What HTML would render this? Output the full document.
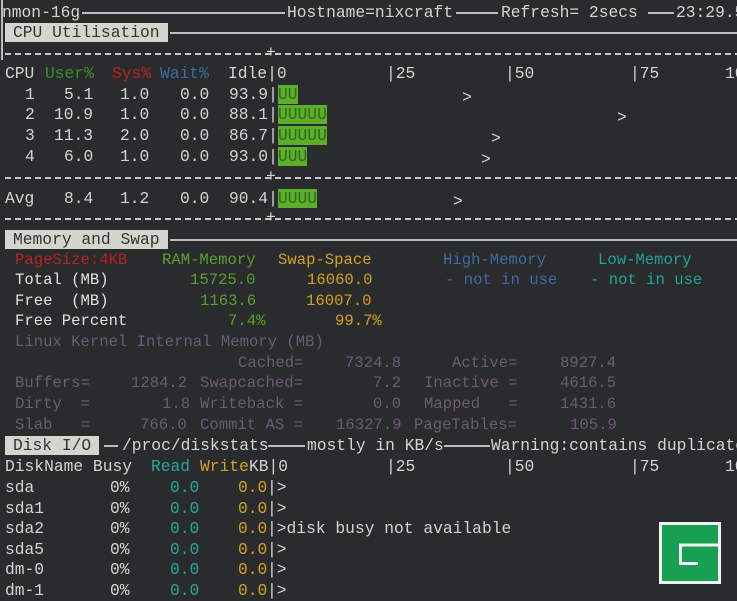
<!DOCTYPE html>
<html><head><meta charset="utf-8"><style>
html,body{margin:0;padding:0;}
body{width:737px;height:600px;background:#2a2b2c;overflow:hidden;position:relative;font-family:"Liberation Mono","DejaVu Sans Mono",monospace;font-size:16.3px;color:#d4d4d4;}
.r{position:absolute;left:0;width:737px;height:21px;}
.r span,.r div{position:absolute;top:0;line-height:21px;white-space:pre;}
.m span{font-size:15.6px;}
.hl{height:2px;background:#bdbdbd;top:10px!important;}
.ds{height:2px;top:10px!important;background:repeating-linear-gradient(90deg,#c8c8c8 0 6px,transparent 6px 10px);}
.box{background:#d5d5d0;color:#333;padding:0 8px;height:19px;top:1px!important;line-height:19px!important;}
.bar{background:#5cae2c;color:#2f6a16;height:19px;top:1px!important;line-height:19px!important;}
.g{color:#3f8f2a}.rd{color:#b92228}.b{color:#3c6ba6}.y{color:#d3a121}.t{color:#27a59a}.p{color:#6d5a78}.w{color:#e2e2e2}.gm{color:#5aa02c}.tl{color:#20a39a}
</style></head><body>
<div style="position:absolute;left:1px;top:0;width:2px;height:60px;background:#bbb"></div>
<!-- row0 -->
<div class="r" style="top:2px">
<span style="left:2px">nmon-16g</span><div class="hl" style="left:82px;width:203px"></div>
<span style="left:287px">Hostname=nixcraft</span><div class="hl" style="left:456px;width:42px"></div>
<span style="left:501px">Refresh= 2secs</span><div class="hl" style="left:648px;width:26px"></div>
<span style="left:676px">23:29.5</span>
</div>
<div class="r" style="top:22px"><span class="box" style="left:5px">CPU Utilisation</span><div class="hl" style="left:170px;width:567px"></div></div>
<div class="r" style="top:43px"><div class="ds" style="left:5px;width:732px"></div><span style="left:266px;top:-1px">+</span></div>
<div class="r" style="top:63px">
<span style="left:5px">CPU</span><span class="g" style="left:45px">User%</span><span class="rd" style="left:112px">Sys%</span><span class="b" style="left:160px">Wait%</span><span style="left:228px">Idle|0</span>
<span style="left:386px">|25</span><span style="left:505px">|50</span><span style="left:630px">|75</span><span style="left:725px">10</span>
</div>
<div class="r" style="top:84px"><span style="left:25px">1</span><span style="left:64px">5.1</span><span style="left:120px">1.0</span><span style="left:180px">0.0</span><span style="left:229px">93.9|</span><span class="bar" style="left:278px">UU</span><span style="left:462px;top:3px">&gt;</span></div>
<div class="r" style="top:104px"><span style="left:25px">2</span><span style="left:54px">10.9</span><span style="left:120px">1.0</span><span style="left:180px">0.0</span><span style="left:229px">88.1|</span><span class="bar" style="left:278px">UUUUU</span><span style="left:617px;top:3px">&gt;</span></div>
<div class="r" style="top:125px"><span style="left:25px">3</span><span style="left:54px">11.3</span><span style="left:120px">2.0</span><span style="left:180px">0.0</span><span style="left:229px">86.7|</span><span class="bar" style="left:278px">UUUUU</span><span style="left:491px;top:3px">&gt;</span></div>
<div class="r" style="top:146px"><span style="left:25px">4</span><span style="left:64px">6.0</span><span style="left:120px">1.0</span><span style="left:180px">0.0</span><span style="left:229px">93.0|</span><span class="bar" style="left:278px">UUU</span><span style="left:481px;top:3px">&gt;</span></div>
<div class="r" style="top:167px"><div class="ds" style="left:5px;width:732px"></div><span style="left:266px;top:-1px">+</span></div>
<div class="r" style="top:188px"><span style="left:5px">Avg</span><span style="left:64px">8.4</span><span style="left:120px">1.2</span><span style="left:180px">0.0</span><span style="left:229px">90.4|</span><span class="bar" style="left:278px">UUUU</span><span style="left:453px;top:3px">&gt;</span></div>
<div class="r" style="top:208px"><div class="ds" style="left:5px;width:732px"></div><span style="left:266px;top:-1px">+</span></div>
<div class="r" style="top:229px"><span class="box" style="left:5px">Memory and Swap</span><div class="hl" style="left:170px;width:567px"></div></div>
<div class="r m" style="top:250px"><span class="rd" style="left:15px">PageSize:4KB</span><span class="gm" style="left:162px">RAM-Memory</span><span class="y" style="left:278px">Swap-Space</span><span class="b" style="left:443px">High-Memory</span><span class="tl" style="left:598px">Low-Memory</span></div>
<div class="r m" style="top:270px"><span class="w" style="left:15px">Total (MB)</span><span class="gm" style="left:190px">15725.0</span><span class="y" style="left:307px">16060.0</span><span class="b" style="left:445px">- not in use</span><span class="tl" style="left:590px">- not in use</span></div>
<div class="r m" style="top:291px"><span class="w" style="left:15px">Free  (MB)</span><span class="gm" style="left:200px">1163.6</span><span class="y" style="left:306px">16007.0</span></div>
<div class="r m" style="top:311px"><span class="w" style="left:15px">Free Percent</span><span class="gm" style="left:228px">7.4%</span><span class="y" style="left:335px">99.7%</span></div>
<div class="r m" style="top:332px"><span class="p" style="left:15px">Linux Kernel Internal Memory (MB)</span></div>
<div class="r m" style="top:353px"><span class="p" style="left:238px">Cached=</span><span class="p" style="left:345px">7324.8</span><span class="p" style="left:452px">Active=</span><span class="p" style="left:560px">8927.4</span></div>
<div class="r m" style="top:373px"><span class="p" style="left:15px">Buffers=</span><span class="p" style="left:131px">1284.2</span><span class="p" style="left:200px">Swapcached=</span><span class="p" style="left:373px">7.2</span><span class="p" style="left:424px">Inactive =</span><span class="p" style="left:560px">4616.5</span></div>
<div class="r m" style="top:394px"><span class="p" style="left:15px">Dirty  =</span><span class="p" style="left:162px">1.8</span><span class="p" style="left:200px">Writeback =</span><span class="p" style="left:373px">0.0</span><span class="p" style="left:424px">Mapped   =</span><span class="p" style="left:560px">1431.6</span></div>
<div class="r m" style="top:415px"><span class="p" style="left:15px">Slab   =</span><span class="p" style="left:140px">766.0</span><span class="p" style="left:200px">Commit AS =</span><span class="p" style="left:336px">16327.9</span><span class="p" style="left:414px">PageTables=</span><span class="p" style="left:570px">105.9</span></div>
<div class="r" style="top:435px"><span class="box" style="left:5px">Disk I/O</span><div class="hl" style="left:104px;width:14px"></div><span style="left:122px">/proc/diskstats</span><div class="hl" style="left:268px;width:37px"></div><span style="left:307px">mostly in KB/s</span><div class="hl" style="left:444px;width:46px"></div><span style="left:491px">Warning:contains duplicate</span></div>
<div class="r" style="top:456px"><span style="left:5px">DiskName Busy</span><span class="t" style="left:151px">Read</span><span class="y" style="left:200px">Write</span><span style="left:249px">KB|0</span><span style="left:386px">|25</span><span style="left:505px">|50</span><span style="left:630px">|75</span><span style="left:725px">10</span></div>
<div class="r" style="top:477px"><span style="left:5px">sda</span><span style="left:110px">0%</span><span class="t" style="left:170px">0.0</span><span class="y" style="left:238px">0.0</span><span style="left:267px">|&gt;</span></div>
<div class="r" style="top:498px"><span style="left:5px">sda1</span><span style="left:110px">0%</span><span class="t" style="left:170px">0.0</span><span class="y" style="left:238px">0.0</span><span style="left:267px">|&gt;</span></div>
<div class="r" style="top:518px"><span style="left:5px">sda2</span><span style="left:110px">0%</span><span class="t" style="left:170px">0.0</span><span class="y" style="left:238px">0.0</span><span style="left:267px">|&gt;disk busy not available</span></div>
<div class="r" style="top:539px"><span style="left:5px">sda5</span><span style="left:110px">0%</span><span class="t" style="left:170px">0.0</span><span class="y" style="left:238px">0.0</span><span style="left:267px">|&gt;</span></div>
<div class="r" style="top:559px"><span style="left:5px">dm-0</span><span style="left:110px">0%</span><span class="t" style="left:170px">0.0</span><span class="y" style="left:238px">0.0</span><span style="left:267px">|&gt;</span></div>
<div class="r" style="top:580px"><span style="left:5px">dm-1</span><span style="left:110px">0%</span><span class="t" style="left:170px">0.0</span><span class="y" style="left:238px">0.0</span><span style="left:267px">|&gt;</span></div>
<svg style="position:absolute;left:659px;top:522px" width="62" height="62" viewBox="0 0 62 62">
<rect x="1.5" y="1.5" width="59" height="59" fill="#17a052" stroke="#f2f2f2" stroke-width="3"/>
<path d="M59 23 H21.5 V41.5 H39" fill="none" stroke="#f2f2f2" stroke-width="3"/>
</svg>
</body></html>
